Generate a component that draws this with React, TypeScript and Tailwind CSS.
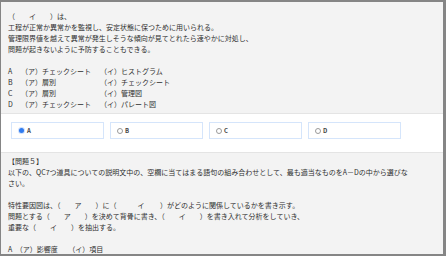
const choices1 = [
  { key: 'A', a: '（ア）チェックシート', b: '（イ）ヒストグラム' },
  { key: 'B', a: '（ア）層別', b: '（イ）チェックシート' },
  { key: 'C', a: '（ア）層別', b: '（イ）管理図' },
  { key: 'D', a: '（ア）チェックシート', b: '（イ）パレート図' },
];

const options = ['A', 'B', 'C', 'D'];

function Radio({ checked }: { checked: boolean }) {
  if (checked) {
    return (
      <span className="flex h-[7px] w-[7px] items-center justify-center rounded-full bg-[#cfe0fb]">
        <span className="h-[5px] w-[5px] rounded-full bg-[#2f7bf0]" />
      </span>
    );
  }
  return <span className="h-[6px] w-[6px] rounded-full border border-[#9a9a9a] bg-white" />;
}

export default function App() {
  return (
    <div
      className="flex h-[256px] w-[446px] flex-col overflow-hidden border-t-2 border-r-[3px] border-b-2 border-l border-[#858585] bg-[#f3f3f3] text-[7px] leading-[11px] text-[#2f2f2f]"
      style={{ fontFamily: '"Noto Sans CJK JP", "Noto Sans", sans-serif' }}
    >
      <section className="px-[7px] pt-[9px] pb-[3px] whitespace-pre">
        <p>（　　イ　　）は、</p>
        <p>工程が正常か異常かを監視し、安定状態に保つために用いられる。</p>
        <p>管理限界値を越えて異常が発生しそうな傾向が見てとれたら速やかに対処し、</p>
        <p>問題が起きないように予防することもできる。</p>
        <p>&nbsp;</p>
        {choices1.map((c) => (
          <div key={c.key} className="grid grid-cols-[13px_79px_auto]">
            <span>{c.key}</span>
            <span>{c.a}</span>
            <span>{c.b}</span>
          </div>
        ))}
      </section>

      <section className="flex gap-[6px] border-y border-[#e4e4e4] bg-white pt-[8px] pb-[13px] pl-[10px]">
        {options.map((o, i) => (
          <label
            key={o}
            className="flex h-[17px] w-[93px] items-center gap-[2px] border border-[#d5e5fb] bg-white pl-[6px] text-[6px] font-bold text-[#444]"
          >
            <Radio checked={i === 0} />
            <span>{o}</span>
          </label>
        ))}
      </section>

      <section className="px-[7px] pt-[3px] whitespace-pre">
        <p>【問題５】</p>
        <p>以下の、QC7つ道具についての説明文中の、空欄に当てはまる語句の組み合わせとして、最も適当なものをA－Dの中から選びな</p>
        <p>さい。</p>
        <p>&nbsp;</p>
        <p>特性要因図は、（　　ア　　）に（　　　イ　　 ）がどのように関係しているかを書き示す。</p>
        <p>問題とする（　　ア　　）を決めて背骨に書き、（　　イ　　）を書き入れて分析をしていき、</p>
        <p>重要な（　　イ　　）を抽出する。</p>
        <p>&nbsp;</p>
        <p>A　（ア）影響度　　（イ）項目</p>
      </section>
    </div>
  );
}
